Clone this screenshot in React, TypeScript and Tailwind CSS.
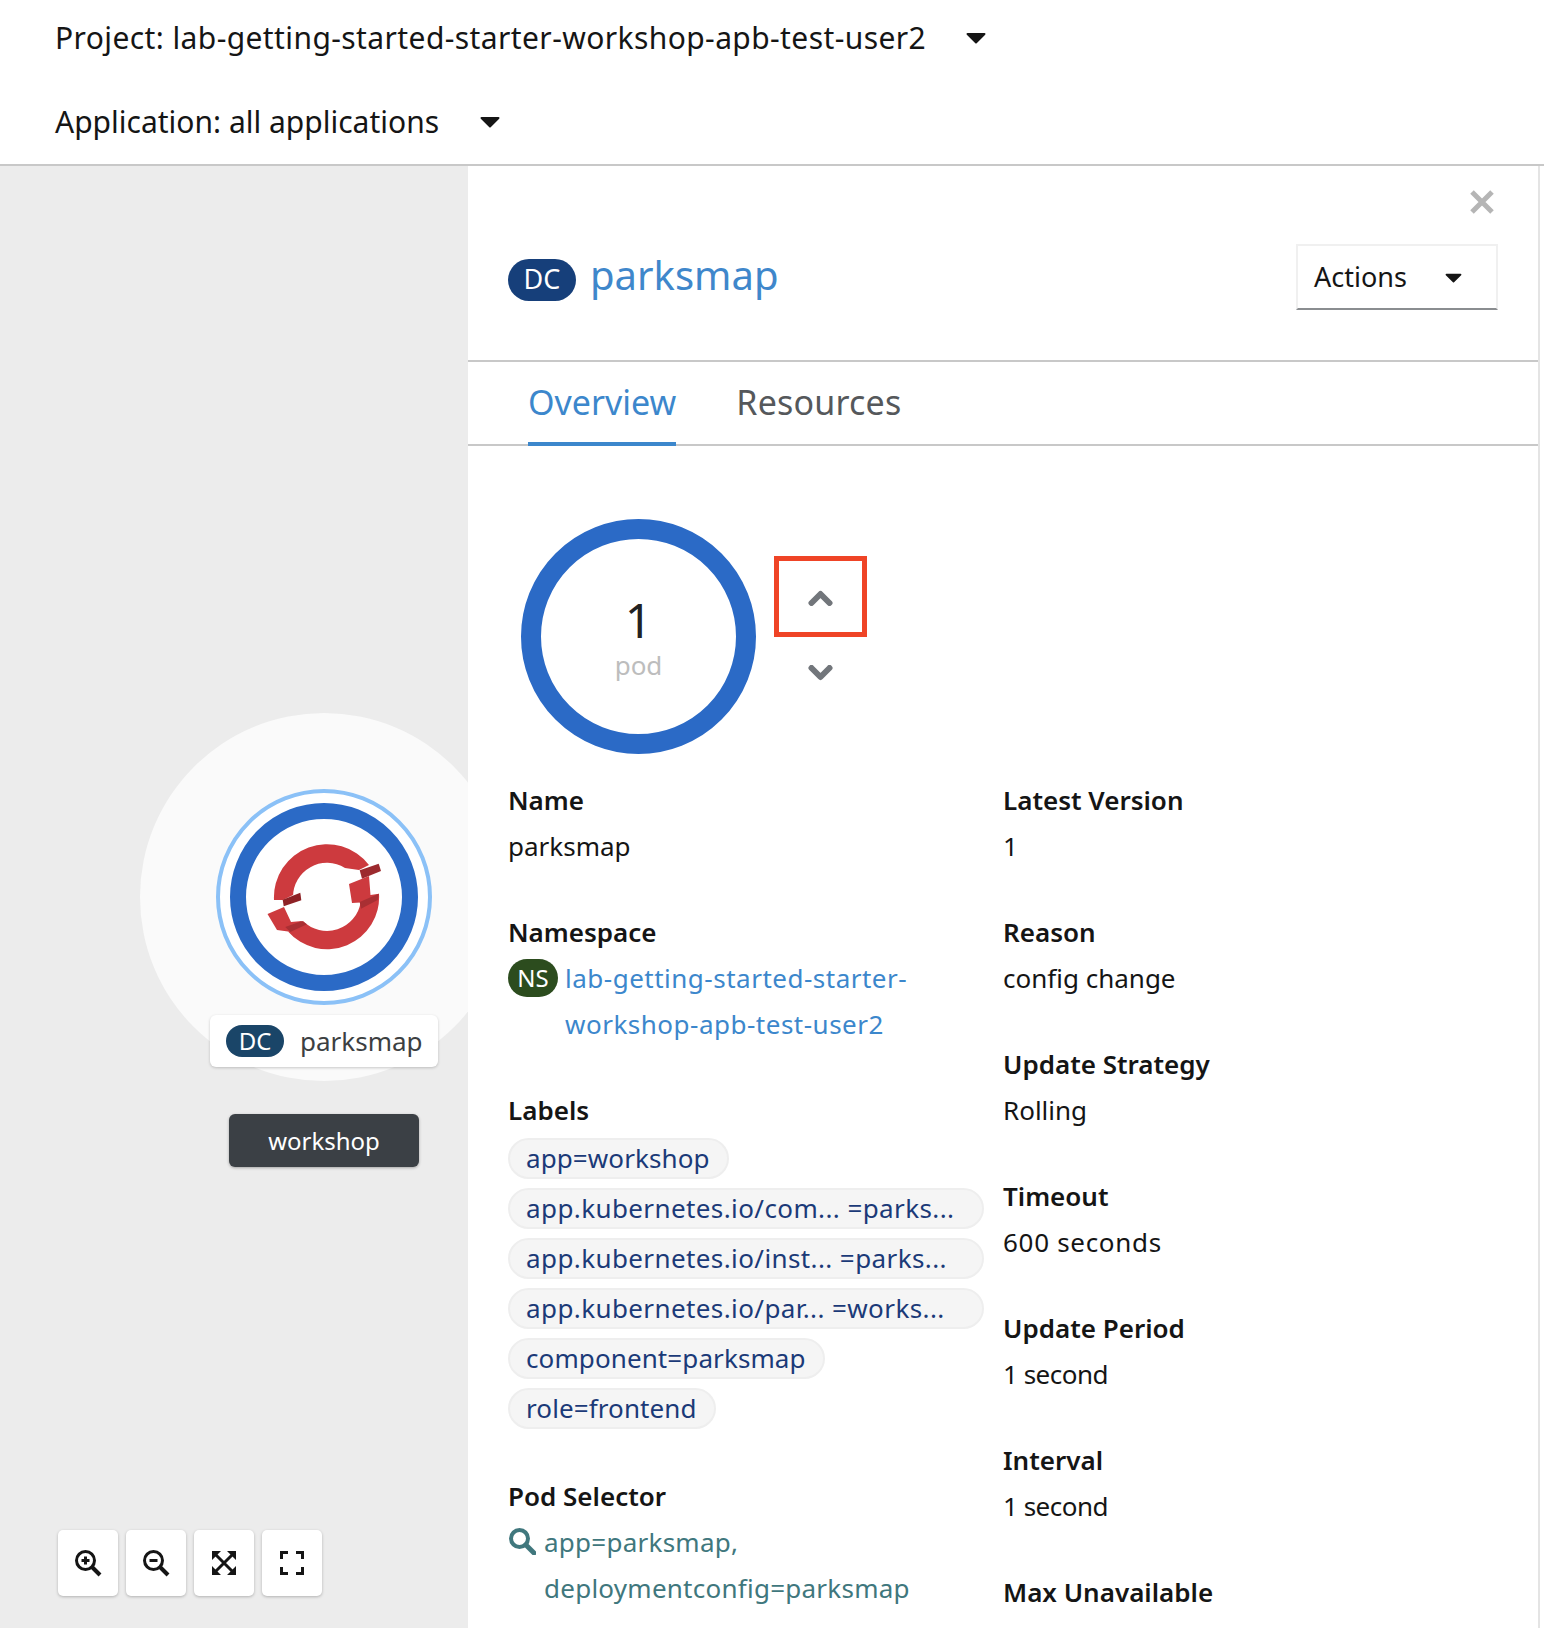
const font = { fontFamily: '"Noto Sans", sans-serif' };

function Caret({ className }: { className: string }) {
  return (
    <svg viewBox="0 0 20 12" className={className} fill="currentColor">
      <path d="M1.5 1h17a1 1 0 0 1 .7 1.7l-8.5 8.5a1 1 0 0 1-1.4 0L.8 2.700A1 1 0 0 1 1.500 1z" />
    </svg>
  );
}

function Chevron({ up, className }: { up?: boolean; className?: string }) {
  return (
    <svg viewBox="0 0 25 16" className={`h-[16px] w-[25px] ${className ?? ''}`} fill="none" stroke="#72767b" strokeWidth="6" strokeLinecap="round" strokeLinejoin="round">
      <path d={up ? 'M3.500 13l9-9 9 9' : 'M3.500 3l9 9 9-9'} />
    </svg>
  );
}

function RedHatRing() {
  return (
    <svg viewBox="0 0 120 120" className="ml-[6px] h-[120px] w-[120px] shrink-0">
      <path d="M7 63 A53 53 0 0 1 102 28 L92 33 L78 31 A34 34 0 0 0 26 60 L26 58 L16 63 Z" fill="#cd3a3e" />
      <path d="M82 47 L102 39 L103.500 58 L112 56.700 A52 52 0 0 1 21 94.500 L36 84 A34 34 0 0 0 93.600 65.400 L85 66 Z" fill="#cd3a3e" />
      <path d="M0.500 77 L17 70 L24 85 L35 84 L21 94.500 L10 93 Z" fill="#cd3a3e" />
      <path d="M15.700 62.700 L33.300 55.700 L34.300 63.300 L16.700 69.300 Z" fill="#8e2226" />
      <path d="M92.700 33.300 L111.700 26.700 L114 34 L95 41.700 Z" fill="#9c2a2e" />
      <path d="M92.700 65 L111.700 56.700 L110.700 63 L94 71.700 Z" fill="#a92f33" />
      <path d="M18.300 90 L35 84 L40 87.300 L23.300 95 Z" fill="#a92f33" />
    </svg>
  );
}

function ZoomButton({ kind }: { kind: 'in' | 'out' | 'fit' | 'full' }) {
  return (
    <button className="flex h-[66px] w-[60px] items-center justify-center rounded-[5px] bg-white shadow-[0_1px_3px_rgba(0,0,0,0.25)]">
      <svg viewBox="0 0 28 28" className="h-7 w-7" fill="none" stroke="#151515" strokeWidth="3">
        {(kind === 'in' || kind === 'out') && (
          <>
            <circle cx="11.500" cy="11.500" r="9" />
            <path d="M18 18l8 8" strokeWidth="4" />
            <path d="M7.500 11.500h8" />
            {kind === 'in' && <path d="M11.500 7.500v8" />}
          </>
        )}
        {kind === 'fit' && (
          <>
            <path d="M5 5l18 18M23 5L5 23" />
            <path d="M2 2h9L2 11zM26 2h-9l9 9zM2 26h9l-9-9zM26 26h-9l9-9z" fill="#151515" stroke="none" />
          </>
        )}
        {kind === 'full' && <path d="M10 3.500H3.500V10M18 3.500h6.500V10M10 24.500H3.500V18M18 24.500h6.500V18" />}
      </svg>
    </button>
  );
}

function Field({ label, children }: { label: string; children: React.ReactNode }) {
  return (
    <div className="mb-[40px]">
      <div className="h-[46px] text-[26px] leading-[46px] font-semibold text-[#151515]">{label}</div>
      <div className="text-[26px] leading-[46px] text-[#151515]">{children}</div>
    </div>
  );
}

function Pill({ wide, children }: { wide?: boolean; children: React.ReactNode }) {
  return (
    <div
      className={
        wide
          ? 'flex h-[41px] w-[476px] items-center whitespace-nowrap rounded-full border-2 border-[#eeeeee] bg-[#f5f5f5] pl-[16px] pr-[17px] text-[26px] tracking-[0.4px] text-[#1b3a78]'
          : 'flex h-[41px] w-fit items-center whitespace-nowrap rounded-full border-2 border-[#eeeeee] bg-[#f5f5f5] pl-[16px] pr-[17px] text-[26px] tracking-[0.1px] text-[#1b3a78]'
      }
    >
      {children}
    </div>
  );
}

export default function App() {
  return (
    <div className="flex h-[1628px] w-[1544px] flex-col overflow-hidden bg-white" style={font}>
      {/* Top selectors */}
      <header className="h-[166px] shrink-0 border-b-2 border-[#c8c8c8] pl-[55px]">
        <div className="flex h-[74px] items-center">
          <span className="text-[30px] tracking-[0.4px] text-[#151515]">Project: lab-getting-started-starter-workshop-apb-test-user2</span>
          <Caret className="ml-[40px] mt-[2px] h-[12px] w-[20px] text-[#151515]" />
        </div>
        <div className="flex h-[86px] items-center pt-[8px]">
          <span className="text-[30px] text-[#151515]">Application: all applications</span>
          <Caret className="ml-[41px] mt-[2px] h-[12px] w-[20px] text-[#151515]" />
        </div>
      </header>

      <div className="flex min-h-0 flex-1">
        {/* Topology canvas */}
        <div className="relative w-[468px] shrink-0 overflow-hidden bg-[#ececec]">
          <div className="absolute left-[140px] top-[547px] h-[368px] w-[368px] rounded-full bg-[#fafafa]" />
          <div className="absolute left-[216px] top-[623px] flex h-[216px] w-[216px] items-center justify-center rounded-full border-[4px] border-[#8bc1f7] bg-white">
            <div className="flex h-[188px] w-[188px] items-center justify-center rounded-full border-[16px] border-[#2b6ac6]">
              <RedHatRing />
            </div>
          </div>
          <div className="absolute left-[210px] top-[849px] flex h-[52px] w-[228px] items-center rounded-[6px] bg-white pl-[16px] shadow-[0_1px_3px_rgba(0,0,0,0.2)]">
            <span className="flex h-[32px] w-[58px] items-center justify-center rounded-full bg-[#1a4568] text-[24px] text-white">DC</span>
            <span className="ml-[16px] text-[26px] text-[#3c3f42]">parksmap</span>
          </div>
          <div className="absolute left-[229px] top-[948px] flex h-[53px] w-[190px] items-center justify-center rounded-[6px] bg-[#3b4045] text-[24px] text-white shadow-[0_1px_3px_rgba(0,0,0,0.3)]">
            workshop
          </div>
          <div className="absolute bottom-[32px] left-[58px] flex gap-[8px]">
            <ZoomButton kind="in" />
            <ZoomButton kind="out" />
            <ZoomButton kind="fit" />
            <ZoomButton kind="full" />
          </div>
        </div>

        {/* Side panel */}
        <div className="w-[1072px] shrink-0 border-r-2 border-[#e4e4e4] bg-white">
          <div className="relative h-[196px] border-b-2 border-[#c8c8c8]">
            <svg viewBox="0 0 24 24" className="absolute right-[44px] top-[24px] h-[24px] w-[24px]" fill="none" stroke="#b5b5b5" strokeWidth="5">
              <path d="M2 2l20 20M22 2L2 22" />
            </svg>
            <div className="flex h-full items-center justify-between pl-[40px] pr-[40px] pt-[28px]">
              <div className="flex items-center">
                <span className="mt-[5px] flex h-[42px] w-[68px] items-center justify-center rounded-full bg-[#163f7a] text-[27px] text-white">DC</span>
                <span className="mb-[4px] ml-[14px] text-[40px] text-[#3f87cb]">parksmap</span>
              </div>
              <button className="flex h-[66px] w-[202px] items-center justify-between border-2 border-[#f0f0f0] border-b-[#8a8d90] pl-[16px] pr-[34px] text-[27px] text-[#151515]">
                Actions
                <Caret className="mt-[2px] h-[10px] w-[17px] text-[#151515]" />
              </button>
            </div>
          </div>

          <div className="flex h-[84px] gap-[60px] border-b-2 border-[#c8c8c8] pl-[60px]">
            <div className="h-[84px] border-b-4 border-[#3c87cc] pt-[15px] text-[34px] text-[#3c87cc]">Overview</div>
            <div className="pt-[15px] text-[34px] tracking-[0.2px] text-[#55585b]">Resources</div>
          </div>

          {/* Pod ring and scale buttons */}
          <div className="flex pl-[53px] pt-[73px]">
            <div className="flex h-[235px] w-[235px] flex-col items-center justify-center rounded-full border-[20px] border-[#2b6ac6]">
              <span className="text-[48px] leading-[56px] text-[#222222]">1</span>
              <span className="text-[26px] leading-[34px] text-[#bdbdbd]">pod</span>
            </div>
            <div className="ml-[18px] flex flex-col items-center pt-[37px]">
              <div className="flex h-[81px] w-[93px] items-center justify-center border-[5px] border-[#ef4426] pt-[2px]">
                <Chevron up />
              </div>
              <Chevron className="mt-[28px]" />
            </div>
          </div>

          {/* Details */}
          <div className="mt-[23px] flex pl-[40px]">
            <div className="w-[495px] shrink-0">
              <Field label="Name">parksmap</Field>
              <Field label="Namespace">
                <div className="flex">
                  <span className="mt-[4px] flex h-[38px] w-[50px] shrink-0 items-center justify-center rounded-full bg-[#2c4c1e] text-[24px] text-white">NS</span>
                  <span className="ml-[7px] tracking-[0.5px] text-[#3c87cc]">lab-getting-started-starter-workshop-apb-test-user2</span>
                </div>
              </Field>
              <div className="mb-[44px]">
                <div className="h-[46px] text-[26px] leading-[46px] font-semibold text-[#151515]">Labels</div>
                <div className="mt-[5px] flex flex-col gap-[9px]">
                  <Pill>app=workshop</Pill>
                  <Pill wide>app.kubernetes.io/com... =parks...</Pill>
                  <Pill wide>app.kubernetes.io/inst... =parks...</Pill>
                  <Pill wide>app.kubernetes.io/par... =works...</Pill>
                  <Pill>component=parksmap</Pill>
                  <Pill>role=frontend</Pill>
                </div>
              </div>
              <div>
                <div className="h-[46px] text-[26px] leading-[46px] font-semibold text-[#151515]">Pod Selector</div>
                <div className="flex text-[26px] leading-[46px] tracking-[0.25px] text-[#40777d]">
                  <svg viewBox="0 0 28 28" className="mt-[8px] h-[28px] w-[28px] shrink-0" fill="none" stroke="#40777d">
                    <circle cx="11.500" cy="11.500" r="8.500" strokeWidth="4" />
                    <path d="M18 18l8 8" strokeWidth="5" strokeLinecap="round" />
                  </svg>
                  <span className="ml-[8px]">app=parksmap,<br />deploymentconfig=parksmap</span>
                </div>
              </div>
            </div>
            <div className="flex-1">
              <Field label="Latest Version">1</Field>
              <Field label="Reason">config change</Field>
              <Field label="Update Strategy">Rolling</Field>
              <Field label="Timeout"><span className="tracking-[0.7px]">600 seconds</span></Field>
              <Field label="Update Period"><span className="tracking-[-0.5px]">1 second</span></Field>
              <Field label="Interval"><span className="tracking-[-0.5px]">1 second</span></Field>
              <Field label="Max Unavailable">25% of 1 pod</Field>
            </div>
          </div>
        </div>
      </div>
    </div>
  );
}
